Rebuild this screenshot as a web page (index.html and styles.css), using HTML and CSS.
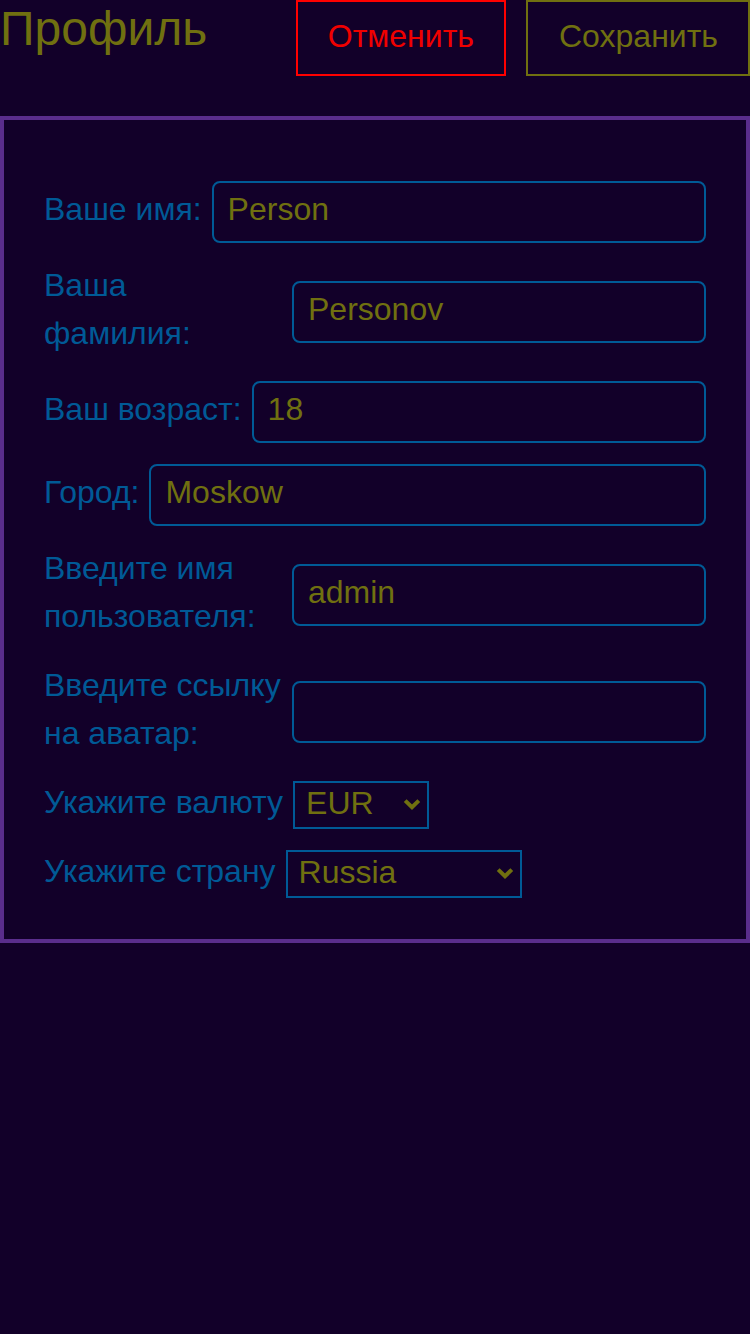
FILE: index.html
```html
<!DOCTYPE html>
<html lang="ru">
<head>
<meta charset="utf-8">
<title>Профиль</title>
<link rel="stylesheet" href="styles.css">
</head>
<body>
<div class="page">
  <header class="header">
    <h1 class="title">Профиль</h1>
    <div class="actions">
      <button class="btn btn-cancel" type="button">Отменить</button>
      <button class="btn btn-save" type="button">Сохранить</button>
    </div>
  </header>

  <section class="card">
    <div class="row">
      <label class="label">Ваше имя:</label>
      <input class="input" type="text" value="Person">
    </div>
    <div class="row">
      <label class="label">Ваша фамилия:</label>
      <input class="input" type="text" value="Personov">
    </div>
    <div class="row">
      <label class="label">Ваш возраст:</label>
      <input class="input" type="text" value="18">
    </div>
    <div class="row">
      <label class="label">Город:</label>
      <input class="input" type="text" value="Moskow">
    </div>
    <div class="row">
      <label class="label">Введите имя пользователя:</label>
      <input class="input" type="text" value="admin">
    </div>
    <div class="row">
      <label class="label">Введите ссылку на аватар:</label>
      <input class="input" type="text" value="">
    </div>
    <div class="row">
      <label class="label">Укажите валюту</label>
      <div class="select-wrap">
        <select class="select select-currency">
          <option>EUR</option>
          <option>USD</option>
          <option>RUB</option>
        </select>
        <svg class="chevron" width="18" height="13" viewBox="0 0 18 13" aria-hidden="true"><path d="M2.2 2.6 L9 9.2 L15.8 2.6" fill="none" stroke="currentColor" stroke-width="4"/></svg>
      </div>
    </div>
    <div class="row">
      <label class="label">Укажите страну</label>
      <div class="select-wrap">
        <select class="select select-country">
          <option>Russia</option>
          <option>Belarus</option>
          <option>Kazakhstan</option>
          <option>Ukraine</option>
          <option>Armenia</option>
        </select>
        <svg class="chevron" width="18" height="13" viewBox="0 0 18 13" aria-hidden="true"><path d="M2.2 2.6 L9 9.2 L15.8 2.6" fill="none" stroke="currentColor" stroke-width="4"/></svg>
      </div>
    </div>
  </section>
</div>
</body>
</html>
```

FILE: styles.css
```css
* {
  box-sizing: border-box;
}

html, body {
  margin: 0;
  padding: 0;
  background: #120029;
}

body {
  min-height: 1334px;
  font-family: "Liberation Sans", Arial, sans-serif;
  font-size: 32px;
}

.header {
  display: flex;
  align-items: flex-start;
  height: 76px;
}

.title {
  margin: 0;
  font-size: 48px;
  font-weight: normal;
  line-height: 58px;
  color: #707010;
}

.actions {
  margin-left: auto;
  display: flex;
  gap: 20px;
}

.btn {
  margin: 0;
  background: transparent;
  border: 2px solid;
  border-radius: 0;
  font-family: inherit;
  font-size: 32px;
  line-height: 36px;
  padding: 16px 30px 20px;
}

.btn-cancel {
  border-color: #ff0000;
  color: #f00000;
}

.btn-save {
  border-color: #707010;
  color: #707010;
  padding-left: 31px;
}

.card {
  margin-top: 40px;
  border: 4px solid #5a2d8c;
  padding: 40px 40px 41px;
  display: flex;
  flex-direction: column;
  gap: 21px;
}

.card > .row:first-child {
  margin-top: 21px;
}

.row {
  display: flex;
  align-items: center;
  gap: 10px;
}

.label {
  flex: 0 1 auto;
  color: #005a96;
  font-size: 32px;
  line-height: 48px;
  margin-top: -3px;
  padding-bottom: 3px;
}

.input {
  flex: 1 0 414px;
  min-width: 0;
  height: 62px;
  margin: 0;
  padding: 0 14px 5px;
  border: 2px solid #005a96;
  border-radius: 8px;
  background: transparent;
  color: #707010;
  font-family: inherit;
  font-size: 32px;
  outline: none;
}

.select-wrap {
  position: relative;
  display: flex;
  flex: 0 0 auto;
  color: #707010;
}

.select {
  appearance: none;
  -webkit-appearance: none;
  height: 48px;
  margin: 0;
  padding: 0 40px 4px 11px;
  border: 2px solid #005a96;
  border-radius: 0;
  background: transparent;
  color: #707010;
  font-family: inherit;
  font-size: 32px;
  outline: none;
}

.select option {
  background: #120029;
  color: #707010;
}

.select-currency {
  width: 136px;
}

.select-country {
  width: 236px;
}

.chevron {
  position: absolute;
  right: 8px;
  top: 17px;
  pointer-events: none;
}
```
